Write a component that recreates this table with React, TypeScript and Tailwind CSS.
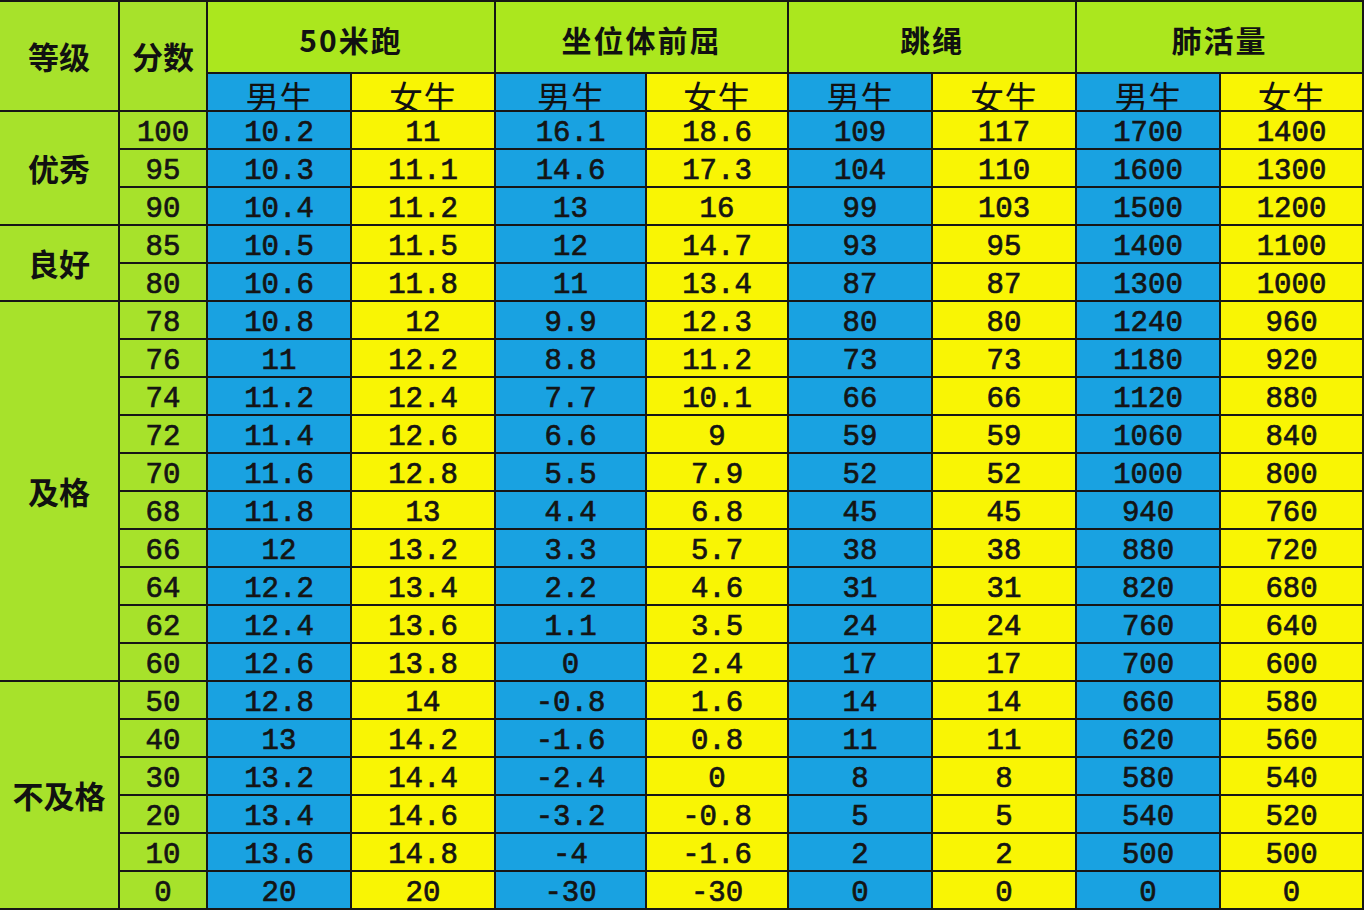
const rows: [string, string, string, string, string, string, string, string, string][] = [
  ['100', '10.2', '11', '16.1', '18.6', '109', '117', '1700', '1400'],
  ['95', '10.3', '11.1', '14.6', '17.3', '104', '110', '1600', '1300'],
  ['90', '10.4', '11.2', '13', '16', '99', '103', '1500', '1200'],
  ['85', '10.5', '11.5', '12', '14.7', '93', '95', '1400', '1100'],
  ['80', '10.6', '11.8', '11', '13.4', '87', '87', '1300', '1000'],
  ['78', '10.8', '12', '9.9', '12.3', '80', '80', '1240', '960'],
  ['76', '11', '12.2', '8.8', '11.2', '73', '73', '1180', '920'],
  ['74', '11.2', '12.4', '7.7', '10.1', '66', '66', '1120', '880'],
  ['72', '11.4', '12.6', '6.6', '9', '59', '59', '1060', '840'],
  ['70', '11.6', '12.8', '5.5', '7.9', '52', '52', '1000', '800'],
  ['68', '11.8', '13', '4.4', '6.8', '45', '45', '940', '760'],
  ['66', '12', '13.2', '3.3', '5.7', '38', '38', '880', '720'],
  ['64', '12.2', '13.4', '2.2', '4.6', '31', '31', '820', '680'],
  ['62', '12.4', '13.6', '1.1', '3.5', '24', '24', '760', '640'],
  ['60', '12.6', '13.8', '0', '2.4', '17', '17', '700', '600'],
  ['50', '12.8', '14', '-0.8', '1.6', '14', '14', '660', '580'],
  ['40', '13', '14.2', '-1.6', '0.8', '11', '11', '620', '560'],
  ['30', '13.2', '14.4', '-2.4', '0', '8', '8', '580', '540'],
  ['20', '13.4', '14.6', '-3.2', '-0.8', '5', '5', '540', '520'],
  ['10', '13.6', '14.8', '-4', '-1.6', '2', '2', '500', '500'],
  ['0', '20', '20', '-30', '-30', '0', '0', '0', '0'],
]

const levels = [
  { name: '优秀', span: 'row-span-3' },
  { name: '良好', span: 'row-span-2' },
  { name: '及格', span: 'row-span-10' },
  { name: '不及格', span: 'row-span-6' },
]

const events = ['50米跑', '坐位体前屈', '跳绳', '肺活量']

const cjk = "font-['Noto_Sans_CJK_SC','Noto_Sans',sans-serif]"
const num =
  "font-['Liberation_Mono','DejaVu_Sans_Mono',monospace] text-[29px] leading-none text-[#141414] [-webkit-text-stroke:0.7px_#141414]"

export default function App() {
  return (
    <div className="min-h-screen bg-white">
      <div className="grid w-[1364px] grid-cols-[118px_86px_142px_142px_149px_140px_142px_142px_142px_141px] grid-rows-[70px_36px_repeat(21,36px)] gap-[2px] bg-[#161616] pt-[2px] pr-[2px] pb-[2px]">
        <div className={`${cjk} row-span-2 flex items-center justify-center bg-[#a7e22b] text-[31px] font-bold text-[#111]`}>
          等级
        </div>
        <div className={`${cjk} row-span-2 flex items-center justify-center bg-[#a7e22b] text-[31px] font-bold text-[#111]`}>
          分数
        </div>
        {events.map((e) => (
          <div
            key={e}
            className={`${cjk} col-span-2 flex items-center justify-center bg-[#abe71e] pt-[4px] text-[30px] font-bold tracking-[2px] text-[#111]`}
          >
            {e}
          </div>
        ))}
        {events.map((e) => (
          <div key={e} className="col-span-2 grid grid-cols-subgrid">
            <div className={`${cjk} flex justify-center overflow-hidden bg-[#19a2e1] pt-[6px] text-[34px] leading-none text-[#111]`}>
              男生
            </div>
            <div className={`${cjk} flex justify-center overflow-hidden bg-[#f9f504] pt-[6px] text-[34px] leading-none text-[#111]`}>
              女生
            </div>
          </div>
        ))}

        <div className="row-span-21 grid grid-rows-subgrid">
          {levels.map((l) => (
            <div
              key={l.name}
              className={`${cjk} ${l.span} flex items-center justify-center bg-[#a7e22b] text-[31px] font-bold text-[#111]`}
            >
              {l.name}
            </div>
          ))}
        </div>

        {rows.map((r) => (
          <div key={r[0]} className="col-span-9 grid grid-cols-subgrid">
            {r.map((v, i) => (
              <div
                key={i}
                className={`${num} flex items-center justify-center pt-[7px] ${
                  i === 0 ? 'bg-[#a7e22b]' : i % 2 === 1 ? 'bg-[#19a2e1]' : 'bg-[#f9f504]'
                }`}
              >
                {v}
              </div>
            ))}
          </div>
        ))}
      </div>
    </div>
  )
}
